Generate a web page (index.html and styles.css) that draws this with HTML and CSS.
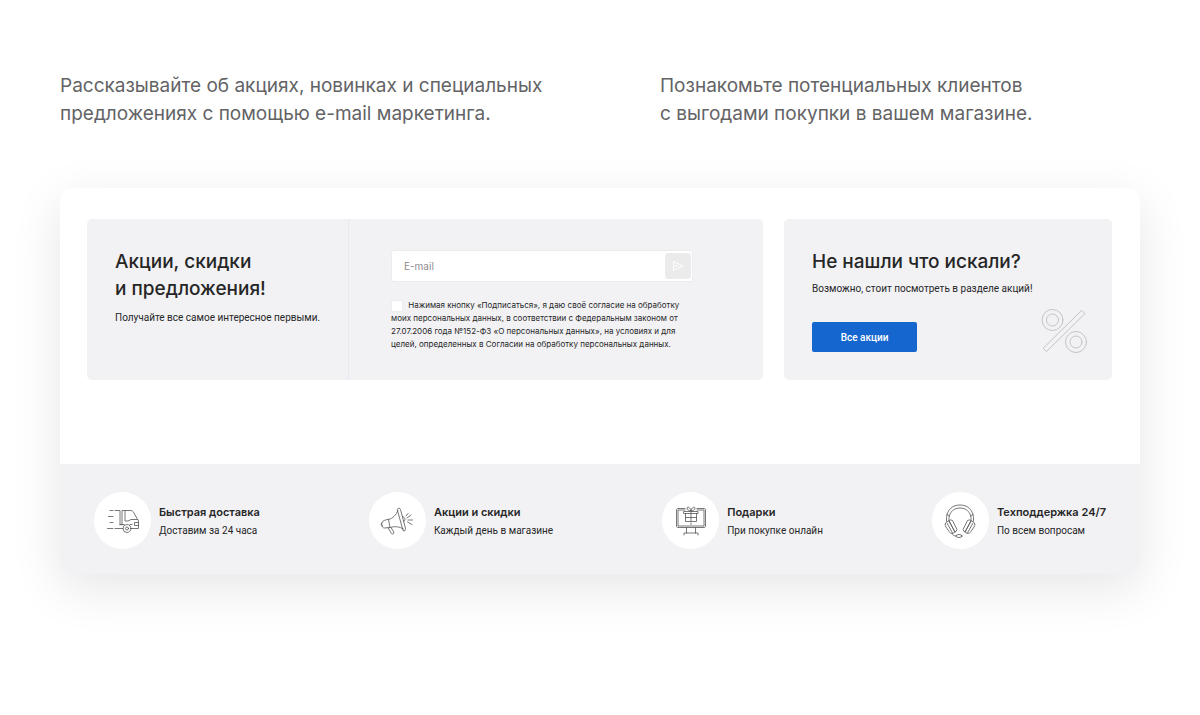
FILE: index.html
```html
<!DOCTYPE html>
<html lang="ru">
<head>
    <meta charset="UTF-8">
    <meta name="viewport" content="width=device-width, initial-scale=1.0">
    <title>Акции и преимущества</title>
    <link rel="stylesheet" href="styles.css">
</head>
<body>
    <div class="page">
        <div class="intro">
            <p>Рассказывайте об акциях, новинках и специальных<br>предложениях с помощью e-mail маркетинга.</p>
            <p>Познакомьте потенциальных клиентов<br>с выгодами покупки в вашем магазине.</p>
        </div>

        <main class="card">
            <div class="promo">
                <section class="panel subscribe">
                    <div class="subscribe-text">
                        <h2>Акции, скидки<br>и предложения!</h2>
                        <p>Получайте все самое интересное первыми.</p>
                    </div>
                    <form class="subscribe-form">
                        <div class="email-box">
                            <input type="email" placeholder="E-mail" aria-label="E-mail">
                            <button type="button" aria-label="Подписаться">
                                <svg width="14" height="14" viewBox="0 0 14 14">
                                    <path d="M2.500 5.500 V2.500 L12 7 L2.500 11.500 V7 H7"/>
                                </svg>
                            </button>
                        </div>
                        <div class="consent">
                            <input type="checkbox" id="consent">
                            <label for="consent">Нажимая кнопку «Подписаться», я даю своё согласие на обработку<br>моих персональных данных, в соответствии с Федеральным законом от<br>27.07.2006 года №152-ФЗ «О персональных данных», на условиях и для<br>целей, определенных в Согласии на обработку персональных данных.</label>
                        </div>
                    </form>
                </section>

                <section class="panel search-more">
                    <div>
                        <h2>Не нашли что искали?</h2>
                        <p>Возможно, стоит посмотреть в разделе акций!</p>
                        <button type="button" class="btn">Все акции</button>
                    </div>
                    <svg class="percent" width="48" height="48" viewBox="0 0 48 48">
                        <circle cx="12.5" cy="13" r="10.5"/>
                        <circle cx="12.5" cy="13" r="6"/>
                        <circle cx="36" cy="35" r="10.5"/>
                        <circle cx="36" cy="35" r="6"/>
                        <path d="M42 3.500 L45 6.500 L6.500 44.500 L3.500 41.500 Z"/>
                    </svg>
                </section>
            </div>

            <ul class="features">
                <li>
                    <span class="icon">
                        <svg width="34" height="28" viewBox="0 0 34 28">
                            <path d="M4 3.500 H7 M9 3.500 H14 V18 M2.500 9.500 H7 M4 15.500 H7 M1.500 21.500 H7 M9 21.500 H17 M16 18 V3.500 H24 C26 3.500 27 4 28 6 L31 11.500 C32 12.500 32.500 13.500 32.500 15 V21.500 H25"/>
                            <path d="M19 3.500 V14 H22 L25 12.500 H31.500 M32.500 15.500 H28.500 V18.500 H32.500 M14 17.500 H18 M24 17.500 H26"/>
                            <circle cx="21" cy="21.500" r="4"/>
                            <circle cx="21" cy="21.500" r="1.500"/>
                        </svg>
                    </span>
                    <div>
                        <h3>Быстрая доставка</h3>
                        <p>Доставим за 24 часа</p>
                    </div>
                </li>
                <li>
                    <span class="icon">
                        <svg width="34" height="28" viewBox="0 0 34 28">
                            <path d="M8.500 12.500 C13 11.500 16 8 17.800 3.500 M10 20.500 C15 19 19 19.500 23.500 22 M8.500 12.500 L10 20.500 L4.500 21 C1 21 0.500 14.500 4 13.500 Z M2 16 C0.500 16 1 19 2.500 19"/>
                            <path d="M17.500 2 C18.500 0.800 20 0.800 20.500 2.500 L25.500 21.500 C26 23.500 24.500 24.500 23 23.500 L17.500 3.500 Z M22.500 9.500 C25.500 10 26 14 23.500 14.500"/>
                            <path d="M8 20.800 L11.500 26.500 C12.500 27.800 14.500 26.500 13.700 25 L11 20.500 M26 9 L28 6.500 M27 11 L31 8 M28 13 H32.500 M27.500 15 L32 17.500"/>
                        </svg>
                    </span>
                    <div>
                        <h3>Акции и скидки</h3>
                        <p>Каждый день в магазине</p>
                    </div>
                </li>
                <li>
                    <span class="icon">
                        <svg width="32" height="30" viewBox="0 0 32 30">
                            <path d="M10 2.500 H3 C2 2.500 1.500 3 1.500 4 V20 C1.500 21 2 21.500 3 21.500 H29 C30 21.500 30.500 21 30.500 20 V4 C30.500 3 30 2.500 29 2.500 H22 M10 4 H3 V20 H29 V4 H22"/>
                            <path d="M9 5.500 H23 V7.500 H9 Z M10.500 7.500 V15.500 H21.500 V7.500 M16 5.500 V15.500 M10.500 11.500 H21.500 M16 17 V18.500 M11.500 21.500 V27 M20.500 21.500 V27 M9 29 V27 H23 V29"/>
                            <path d="M16 5 C14 5 11.500 3.500 12 2 C12.500 0 15.500 1.500 16 5 C16.500 1.500 19.500 0 20 2 C20.500 3.500 18 5 16 5"/>
                        </svg>
                    </span>
                    <div>
                        <h3>Подарки</h3>
                        <p>При покупке онлайн</p>
                    </div>
                </li>
                <li>
                    <span class="icon">
                        <svg width="34" height="36" viewBox="0 0 34 36">
                            <path d="M3.500 18 V14.500 C4 7 9.500 2 17 2 C24.500 2 30 7 30.500 14.500 V18 M6 17 V14.500 C7 8.500 11 5 17 5 C23 5 27 8.500 28 14.500 V17 M4 11.500 L6.500 13 M30 11.500 L27.500 13"/>
                            <path d="M6 18 L12 29 L9.500 30.500 C8 30.500 7 30 6 28.500 L3 24 C1.500 21.500 2 20 3.500 19 Z M8 17 L9.500 17.500 L14 26.500 L13 28.500 L12 29 L6 18 Z M4 20 L9.500 30"/>
                            <path d="M28 18 L22 29 L24.500 30.500 C26 30.500 27 30 28 28.500 L31 24 C32.500 21.500 32 20 30.500 19 Z M26 17 L24.500 17.500 L20 26.500 L21 28.500 L22 29 L28 18 Z M30 20 L24.500 30"/>
                            <path d="M9 30.500 C10 32.500 11 33 13 33"/>
                            <ellipse cx="16" cy="33" rx="3" ry="1.500"/>
                        </svg>
                    </span>
                    <div>
                        <h3>Техподдержка 24/7</h3>
                        <p>По всем вопросам</p>
                    </div>
                </li>
            </ul>
        </main>
    </div>
</body>
</html>
```
FILE: styles.css
```css
:root {
    --text: #262626;
    --muted: #636366;
    --panel: #f2f2f5;
    --blue: #1567cf;
}

* {
    box-sizing: border-box;
}

body {
    margin: 0;
    background: #fff;
    color: var(--text);
    font-family: Roboto, sans-serif;
}

h2, h3, p, ul {
    margin: 0;
    padding: 0;
}

.page {
    padding: 72px 60px;
}

.intro {
    display: grid;
    grid-template-columns: 9fr 8fr;
    column-gap: 60px;
    margin-bottom: 60px;
    color: var(--muted);
    font-family: Inter, sans-serif;
    font-size: 19px;
    line-height: 28px;
    white-space: nowrap;
}

.card {
    border-radius: 12px;
    background: #fff;
    box-shadow: 0 14px 50px rgba(0, 0, 0, 0.1);
    overflow: hidden;
}

.promo {
    display: grid;
    grid-template-columns: 676fr 328fr;
    gap: 21px;
    padding: 31px 28px 84px 27px;
}

.panel {
    border-radius: 5px;
    background: var(--panel);
}

.panel h2 {
    font-family: Inter, sans-serif;
    font-size: 19px;
    font-weight: 500;
    line-height: 27px;
}

.panel p {
    margin-top: 6px;
    font-size: 10px;
    line-height: 16px;
    white-space: nowrap;
}

.subscribe {
    display: flex;
}

.subscribe-text {
    width: 262px;
    padding: 29px 28px;
    border-right: 1px solid #e8e8ef;
}

.subscribe-text p {
    margin-top: 8px;
}

.subscribe-form {
    flex: 1;
    padding: 31px 70px 29px 42px;
}

.email-box {
    display: flex;
    align-items: center;
    padding: 2px 1px 2px 2px;
    border: 1px solid #ececf0;
    border-radius: 3px;
    background: #fff;
}

.email-box input {
    flex: 1;
    min-width: 0;
    padding: 0 10px;
    border: 0;
    background: none;
    font: 10px Inter, sans-serif;
}

.email-box input::placeholder {
    color: #8e8e93;
}

.email-box button {
    display: flex;
    align-items: center;
    justify-content: center;
    width: 26px;
    height: 26px;
    padding: 0;
    border: 0;
    border-radius: 3px;
    background: #ebebeb;
}

svg {
    fill: none;
    stroke-linecap: round;
    stroke-linejoin: round;
}

.email-box svg {
    stroke: #fff;
}

.consent {
    margin-top: 17px;
    font-family: Inter, sans-serif;
    font-size: 8px;
    line-height: 13px;
    white-space: nowrap;
}

.consent input {
    appearance: none;
    width: 12px;
    height: 12px;
    margin: 0 3px 0 0;
    border: 1px solid #ececf0;
    border-radius: 1px;
    background: #fff;
    vertical-align: middle;
}

.search-more {
    display: flex;
    justify-content: space-between;
    align-items: flex-end;
    padding: 29px 24px 28px 28px;
}

.search-more > div {
    width: 0;
    flex: 1;
}

.btn {
    display: block;
    width: 105px;
    height: 30px;
    margin-top: 25px;
    border: 0;
    border-radius: 2px;
    background: var(--blue);
    color: #fff;
    font: 500 10px Roboto, sans-serif;
}

.percent {
    margin-bottom: -3px;
    stroke: #c4c4c6;
}

.features {
    display: flex;
    justify-content: space-between;
    padding: 28px 34px 25px;
    background: var(--panel);
    list-style: none;
}

.features li {
    display: flex;
    align-items: center;
    gap: 8px;
    white-space: nowrap;
}

.icon {
    display: flex;
    align-items: center;
    justify-content: center;
    width: 57px;
    height: 57px;
    border-radius: 50%;
    background: #fff;
}

.icon svg {
    stroke: #555;
    stroke-width: 0.8;
}

.features h3 {
    font-family: Inter, sans-serif;
    font-size: 11px;
    font-weight: 600;
    line-height: 20px;
}

.features p {
    font-size: 10px;
    line-height: 18px;
}
```
